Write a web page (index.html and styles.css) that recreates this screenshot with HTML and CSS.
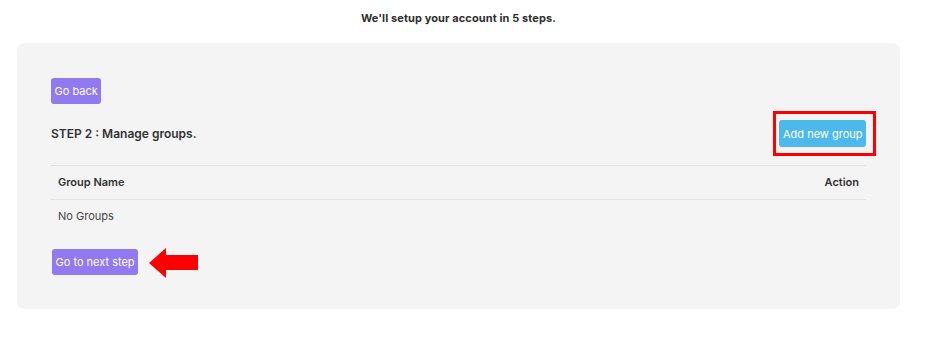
FILE: index.html
```html
<!DOCTYPE html>
<html lang="en">
<head>
  <meta charset="UTF-8">
  <meta name="viewport" content="width=device-width, initial-scale=1.0">
  <title>Account setup</title>
  <link rel="stylesheet" href="styles.css">
</head>
<body>
  <header class="intro">
    <p>We'll setup your account in 5 steps.</p>
  </header>

  <div class="card">
    <button class="btn btn-purple">Go back</button>

    <div class="step-head">
      <h2>STEP 2 : Manage groups.</h2>
      <div class="highlight">
        <button class="btn btn-blue">Add new group</button>
      </div>
    </div>

    <table class="groups">
      <thead>
        <tr><th>Group Name</th><th class="right">Action</th></tr>
      </thead>
      <tbody>
        <tr><td colspan="2">No Groups</td></tr>
      </tbody>
    </table>

    <div class="next-row">
      <button class="btn btn-purple">Go to next step</button>
      <svg class="arrow" width="50" height="30" viewBox="0 0 50 30">
        <polygon points="0,15 17,0 17,7 49,7 49,22 17,22 17,30" fill="#f00"/>
      </svg>
    </div>
  </div>
</body>
</html>
```

FILE: styles.css
```css
body {
  margin: 0;
  padding: 0 31px 0 17px;
  font-family: Inter, "Noto Sans", sans-serif;
  color: #333;
  background: #fff;
}
.intro {
  text-align: center;
  height: 43px;
}
.intro p {
  margin: 0;
  padding-top: 11px;
  font-size: 11px;
  font-weight: 700;
  color: #2f2f2f;
  letter-spacing: 0.1px;
}
.card {
  background: #f4f4f4;
  border-radius: 7px;
  padding: 35px 34px 31px 34px;
}
.btn {
  border: none;
  border-radius: 3px;
  color: #fff;
  font-family: Inter, "Noto Sans", sans-serif;
  font-size: 11px;
  padding: 0 3.5px;
  height: 26px;
  cursor: pointer;
}
.btn-purple {
  background: #9179ef;
}
.btn-blue {
  background: #4db8ec;
  height: 27px;
}
.step-head {
  display: flex;
  justify-content: space-between;
  align-items: center;
  margin-top: 7px;
  height: 45px;
}
.step-head h2 {
  margin: 0;
  font-size: 12px;
  font-weight: 600;
  color: #333;
}
.highlight {
  display: flex;
  border: 3px solid #f00;
  padding: 6px 7px 6px 3px;
  margin-right: -10px;
}
.groups {
  width: 100%;
  border-collapse: collapse;
  margin-top: 9px;
  font-size: 11px;
}
.groups th {
  text-align: left;
  font-weight: 600;
  padding: 9px 7px 10px;
  border-top: 1px solid #e2e2e2;
  border-bottom: 1px solid #e2e2e2;
}
.groups th.right {
  text-align: right;
}
.groups td {
  padding: 9px 7px;
  color: #444;
}
.next-row {
  display: flex;
  align-items: center;
  gap: 11px;
  margin-top: 13px;
}
.next-row .btn {
  margin-left: 1px;
}
.arrow {
  margin-top: 3px;
}
```
